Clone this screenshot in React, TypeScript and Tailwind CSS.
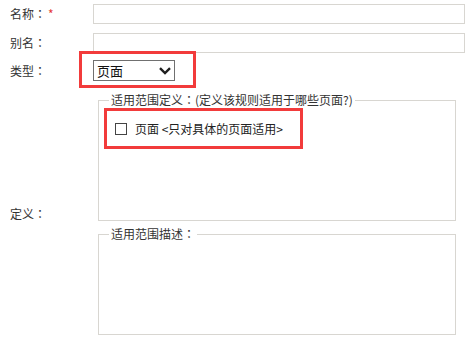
const Colon = () => <span style={{ fontFamily: '"Noto Sans CJK JP", sans-serif' }}>：</span>;

const Label = ({ text, required }: { text: string; required?: boolean }) => (
  <div className="w-[93px] shrink-0 pl-[10px] text-[12px] leading-[16px] text-[#333]">
    {text}
    <Colon />
    {required && <span className="ml-[2px] text-[#e53935]">*</span>}
  </div>
);

const Chevron = () => (
  <svg width="12" height="8" viewBox="0 0 12 8" className="block">
    <path d="M1 1.2 L6 6 L11 1.2" fill="none" stroke="#1f1f1f" strokeWidth="2.4" />
  </svg>
);

export default function App() {
  return (
    <div
      className="w-[469px] h-[341px] bg-white text-[#333] overflow-hidden"
      style={{ fontFamily: '"Noto Sans CJK SC", "Noto Sans", sans-serif' }}
    >
      <div className="flex items-center pt-[4px]">
        <Label text="名称" required />
        <input className="flex-1 mr-[4px] h-[20px] border border-[#d8d6d1] bg-white outline-none" />
      </div>

      <div className="flex items-center mt-[9px]">
        <Label text="别名" />
        <input className="flex-1 mr-[4px] h-[20px] border border-[#d8d6d1] bg-white outline-none" />
      </div>

      <div className="flex items-center mt-[7px]">
        <Label text="类型" />
        <div className="relative">
          <div className="flex items-center justify-between w-[82px] h-[21px] border border-[#707070] pl-[3px] pr-[3px] text-[13px] leading-[16px] text-[#111]">
            <span>页面</span>
            <Chevron />
          </div>
          <div className="absolute -left-[14px] -top-[9px] -right-[21px] -bottom-[7px] border-[3px] border-[#f23b3b] pointer-events-none" />
        </div>
      </div>

      <div className="flex items-center mt-[11px]">
        <Label text="定义" />
        <div className="ml-[5px] w-[358px] flex flex-col gap-[5px]">
          <fieldset className="h-[129px] border border-[#d8d6d1]">
            <legend className="ml-[10px] px-[2px] text-[12px] leading-[16px] text-[#333]">
              适用范围定义<Colon />(定义该规则适用于哪些页面?)
            </legend>
            <div className="ml-[5px] w-[199px] h-[41px] border-[3px] border-[#f23b3b] flex items-center pl-[8px] gap-[8px]">
              <span className="w-[12px] h-[12px] border border-[#444] bg-white shrink-0" />
              <span className="text-[12px] leading-[16px] text-[#222]">页面 &lt;只对具体的页面适用&gt;</span>
            </div>
          </fieldset>
          <fieldset className="h-[109px] border border-[#d8d6d1]">
            <legend className="ml-[10px] px-[2px] text-[12px] leading-[16px] text-[#333]">
              适用范围描述<Colon />
            </legend>
          </fieldset>
        </div>
      </div>
    </div>
  );
}
